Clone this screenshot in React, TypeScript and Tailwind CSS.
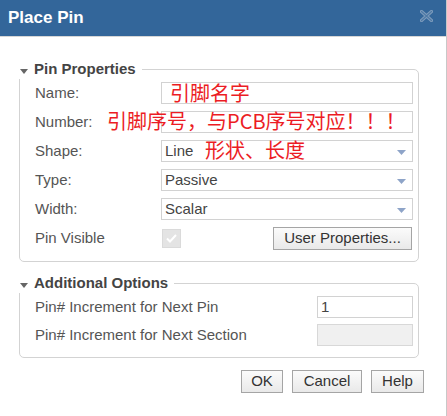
import React from "react";

const font = { fontFamily: '"Liberation Sans", Arial, sans-serif' };

function Arrow() {
  return (
    <svg width="9" height="5" viewBox="0 0 9 5" className="absolute right-[6px] top-[9px]">
      <polygon points="0,0 9,0 4.5,5" fill="#8ea4c8" />
    </svg>
  );
}

function Field({ children, select, gray }: { children?: React.ReactNode; select?: boolean; gray?: boolean }) {
  return (
    <div
      className={`relative h-[22px] w-[252px] border border-[#d2d2d2] ${gray ? "bg-[#f0f0f0]" : "bg-white"} pl-[3px] text-[15px] leading-[20px] text-[#444]`}
    >
      {children}
      {select && <Arrow />}
    </div>
  );
}

function Row({ label, children }: { label: string; children?: React.ReactNode }) {
  return (
    <div className="flex h-[22px] items-center">
      <div className="w-[126px] text-[15px] text-[#555]">{label}</div>
      {children}
    </div>
  );
}

function Legend({ text }: { text: string }) {
  return (
    <div className="absolute left-[-1px] top-[-11px] flex h-[20px] items-center bg-white pr-[6px]">
      <svg width="8" height="5" viewBox="0 0 8 5" className="ml-[1px] mt-[5px]">
        <polygon points="0,0 8,0 4,5" fill="#666" />
      </svg>
      <span className="ml-[6px] text-[15px] font-bold text-[#444]">{text}</span>
    </div>
  );
}

function Btn({ children, w }: { children: React.ReactNode; w: string }) {
  return (
    <div
      className={`flex h-[23px] ${w} items-center justify-center border border-[#a5a5a5] bg-gradient-to-b from-[#fbfbfb] to-[#e9e9e9] text-[15px] text-[#333]`}
    >
      {children}
    </div>
  );
}

export default function App() {
  const red = { fontFamily: '"Noto Sans CJK SC", "Noto Sans", sans-serif' };
  return (
    <div className="relative h-[416px] w-[447px] overflow-hidden border-r border-[#c8c8c8] bg-white" style={font}>
      {/* Title bar */}
      <div className="flex h-[37px] items-center justify-between border-b border-[#d6d6d6] bg-[#33669a] pl-[8px] pr-[13px]">
        <span className="text-[17px] font-bold text-white">Place Pin</span>
        <svg width="13" height="12" viewBox="0 0 13 12" className="mb-[4px]">
          <path d="M1.5 1.5 L11.5 10.5 M11.5 1.5 L1.5 10.5" stroke="#7f9dbd" strokeWidth="3.2" strokeLinecap="round" />
          <path d="M1.5 1.5 L11.5 10.5 M11.5 1.5 L1.5 10.5" stroke="#4f7aa6" strokeWidth="1.2" strokeLinecap="round" />
        </svg>
      </div>

      {/* Pin Properties */}
      <div className="relative ml-[19px] mt-[32px] w-[400px] rounded-[5px] border border-[#d3d3d3] pb-[11px] pl-[15px] pr-[5px] pt-[12px]">
        <Legend text="Pin Properties" />
        <div className="flex flex-col gap-[7px]">
          <Row label="Name:">
            <Field />
          </Row>
          <Row label="Number:">
            <Field />
          </Row>
          <Row label="Shape:">
            <Field select>Line</Field>
          </Row>
          <Row label="Type:">
            <Field select>Passive</Field>
          </Row>
          <Row label="Width:">
            <Field select>Scalar</Field>
          </Row>
          <div className="flex h-[23px] items-center">
            <div className="w-[127px] text-[15px] text-[#555]">Pin Visible</div>
            <div className="flex h-[19px] w-[19px] items-center justify-center border border-[#dadada] bg-[#e4e4e4]">
              <svg width="11" height="9" viewBox="0 0 11 9">
                <path d="M1 4.5 L4 7.5 L10 1" stroke="white" strokeWidth="2" fill="none" />
              </svg>
            </div>
            <div className="ml-auto mr-[1px] flex h-[23px] w-[139px] items-center justify-center border border-[#a5a5a5] bg-gradient-to-b from-[#fbfbfb] to-[#e9e9e9] text-[15px] text-[#333]">
              User Properties...
            </div>
          </div>
        </div>
      </div>

      {/* Additional Options */}
      <div className="relative ml-[19px] mt-[21px] w-[400px] rounded-[5px] border border-[#d3d3d3] pb-[11px] pl-[15px] pr-[5px] pt-[12px]">
        <Legend text="Additional Options" />
        <div className="flex flex-col gap-[6px]">
          <div className="flex h-[22px] items-center">
            <div className="w-[282px] text-[15px] text-[#555]">Pin# Increment for Next Pin</div>
            <div className="h-[22px] w-[96px] border border-[#d2d2d2] bg-white pl-[3px] text-[15px] leading-[20px] text-[#444]">1</div>
          </div>
          <div className="flex h-[22px] items-center">
            <div className="w-[282px] text-[15px] text-[#555]">Pin# Increment for Next Section</div>
            <div className="h-[22px] w-[96px] border border-[#d8d8d8] bg-[#f0f0f0]" />
          </div>
        </div>
      </div>

      {/* Buttons */}
      <div className="mr-[22px] mt-[12px] flex justify-end gap-[9px]">
        <Btn w="w-[42px]">OK</Btn>
        <Btn w="w-[70px]">Cancel</Btn>
        <Btn w="w-[53px]">Help</Btn>
      </div>

      {/* Red annotations */}
      <div className="absolute left-[170px] top-[82px] text-[20px] leading-[22px] text-[#ec1c24]" style={red}>
        引脚名字
      </div>
      <div className="absolute left-[107px] top-[110px] text-[20px] leading-[22px] text-[#ec1c24]" style={red}>
        引脚序号，与PCB序号对应！！！
      </div>
      <div className="absolute left-[205px] top-[139px] text-[20px] leading-[22px] text-[#ec1c24]" style={red}>
        形状、长度
      </div>
    </div>
  );
}
